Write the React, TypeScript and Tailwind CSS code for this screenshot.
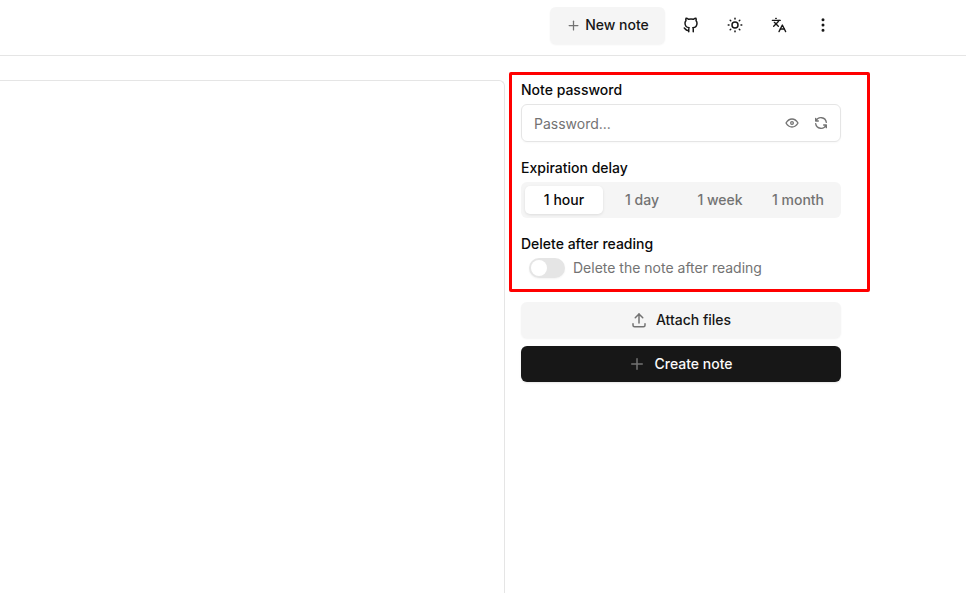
import { Languages } from "lucide-react";
import { TbBrandGithub, TbDotsVertical, TbEye, TbPlus, TbRefresh, TbSun, TbUpload } from "react-icons/tb";

const delays = ["1 hour", "1 day", "1 week", "1 month"];

function Header() {
  return (
    <header className="h-[56px] border-b border-[#e5e5e5] flex items-start pt-[7px] justify-end pr-[121px]">
      <button className="h-[37px] w-[115px] rounded-md bg-[#f5f5f5] shadow-[0_1px_2px_rgba(0,0,0,0.05)] flex items-center justify-center gap-[4px] text-[14px] font-medium text-[#171717]">
        <TbPlus className="text-[#737373]" size={15} />
        <span className="pb-[2px]">New note</span>
      </button>
      <div className="flex items-center ml-[4px]">
        <button className="w-[44px] h-[36px] flex items-center justify-center text-[#171717]">
          <TbBrandGithub size={18} />
        </button>
        <button className="w-[44px] h-[36px] flex items-center justify-center text-[#171717]">
          <TbSun size={18} />
        </button>
        <button className="w-[44px] h-[36px] flex items-center justify-center text-[#171717]">
          <Languages size={16} />
        </button>
        <button className="w-[44px] h-[36px] flex items-center justify-center text-[#171717]">
          <TbDotsVertical size={18} />
        </button>
      </div>
    </header>
  );
}

function SideForm() {
  return (
    <div className="w-[336px] pl-4 pt-[24px] shrink-0 text-[14px] text-[#0a0a0a]">
      <div className="font-medium leading-[20px]">Note password</div>
      <div className="mt-[4px] h-[38px] border border-[#e5e5e5] rounded-md flex items-center pl-[12px] pr-[11px] shadow-[0_1px_2px_rgba(0,0,0,0.03)]">
        <span className="flex-1 text-[#737373]">Password...</span>
        <TbEye className="text-[#737373]" size={16} />
        <TbRefresh className="text-[#737373] ml-[13px]" size={16} />
      </div>

      <div className="mt-[16px] font-medium leading-[20px]">Expiration delay</div>
      <div className="mt-[4px] h-[36px] rounded-md bg-[#f5f5f5] p-[4px] grid grid-cols-4 gap-0">
        {delays.map((d, i) => (
          <div
            key={d}
            className={
              i === 0
                ? "rounded-[5px] bg-white shadow-[0_1px_3px_rgba(0,0,0,0.1)] flex items-center justify-center pb-[2px] font-medium text-[#0a0a0a]"
                : "flex items-center justify-center pb-[2px] font-medium text-[#737373]"
            }
          >
            {d}
          </div>
        ))}
      </div>

      <div className="mt-[16px] font-medium leading-[20px]">Delete after reading</div>
      <div className="mt-[4px] ml-2 flex items-center gap-2 h-[20px]">
        <div className="w-[36px] h-[20px] rounded-full bg-[#e5e5e5] p-[2px] shadow-[0_1px_2px_rgba(0,0,0,0.05)]">
          <div className="w-[16px] h-[16px] rounded-full bg-white" />
        </div>
        <span className="text-[#737373] pb-[2px]">Delete the note after reading</span>
      </div>

      <button className="mt-[24px] w-full h-[36px] rounded-md bg-[#f5f5f5] shadow-[0_1px_2px_rgba(0,0,0,0.05)] flex items-center justify-center gap-2 pr-[1px] font-medium text-[#171717]">
        <TbUpload className="text-[#737373]" size={18} />
        <span className="pb-[2px]">Attach files</span>
      </button>
      <button className="mt-2 w-full h-[36px] rounded-md bg-[#171717] shadow-[0_1px_2px_rgba(0,0,0,0.1)] flex items-center justify-center gap-2 pr-[1px] font-medium text-[#fafafa]">
        <TbPlus className="text-[#737373]" size={18} />
        <span className="pb-[2px]">Create note</span>
      </button>
    </div>
  );
}

export default function App() {
  return (
    <div className="relative h-[593px] w-[966px] overflow-hidden bg-white font-['Inter',sans-serif]">
      <Header />
      <div className="flex h-[537px]">
        <div className="w-[505px] pt-[24px] shrink-0">
          <div className="h-full border-t border-r border-[#e5e5e5] rounded-tr-md" />
        </div>
        <SideForm />
      </div>
      {/* red annotation box over the form */}
      <div className="absolute left-[509px] top-[72px] w-[361px] h-[220px] border-[3px] border-[#ff0000] rounded-[2px] pointer-events-none" />
    </div>
  );
}
